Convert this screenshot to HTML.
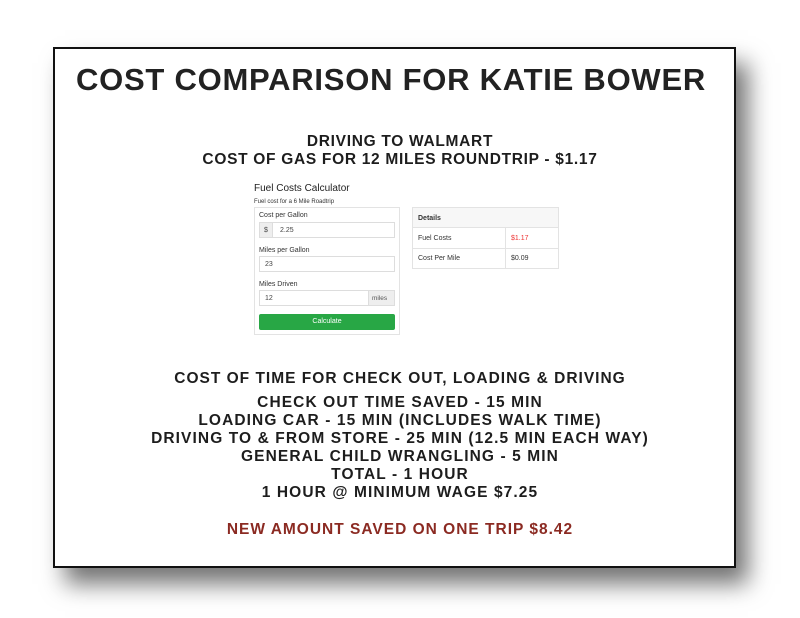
<!DOCTYPE html>
<html><head><style>
*{margin:0;padding:0;box-sizing:border-box}
body{width:800px;height:618px;background:#fff;position:relative;overflow:hidden;font-family:"Liberation Sans",sans-serif}
.card{position:absolute;left:53px;top:47px;width:683px;height:521px;background:#fff;border:2px solid #111;box-shadow:12px 16px 22px rgba(0,0,0,.55)}
.t{position:absolute;left:0;width:800px;text-align:center;font-weight:bold;color:#1d1d1d;white-space:nowrap}
.h1{top:62px;left:-9px;font-size:31px;letter-spacing:0.75px;color:#222}
.s{font-size:15.5px;letter-spacing:1px;line-height:18px}
.c{position:absolute;font-size:7px;color:#333}
.box{position:absolute;border:1px solid #e3e3e3;background:#fff}
.inp{position:absolute;border:1px solid #ddd;height:16px;font-size:7px;color:#444;padding:4px 5px}
</style></head><body>
<div class="card"></div>
<div class="t h1">COST COMPARISON FOR KATIE BOWER</div>
<div class="t s" style="top:133px;letter-spacing:.7px">DRIVING TO WALMART<br>COST OF GAS FOR 12 MILES ROUNDTRIP - $1.17</div>

<div class="c" style="left:254px;top:183px;font-size:10px;color:#222">Fuel Costs Calculator</div>
<div class="c" style="left:254px;top:199px;font-size:6px">Fuel cost for a 6 Mile Roadtrip</div>
<div class="box" style="left:254px;top:207px;width:146px;height:128px"></div>
<div class="c" style="left:259px;top:212px">Cost per Gallon</div>
<div class="inp" style="left:259px;top:222px;width:136px;padding-left:20px">2.25</div>
<div style="position:absolute;left:259px;top:222px;width:14px;height:16px;background:#eee;border:1px solid #ddd;font-size:7px;color:#444;padding:4px 4px">$</div>
<div class="c" style="left:259px;top:247px">Miles per Gallon</div>
<div class="inp" style="left:259px;top:256px;width:136px">23</div>
<div class="c" style="left:259px;top:281px">Miles Driven</div>
<div class="inp" style="left:259px;top:290px;width:136px">12</div>
<div style="position:absolute;left:368px;top:290px;width:27px;height:16px;background:#eee;border:1px solid #ddd;font-size:6.5px;color:#555;padding:4px 3px">miles</div>
<div style="position:absolute;left:259px;top:314px;width:136px;height:16px;background:#28a745;border-radius:2px;color:#fff;font-size:7px;text-align:center;line-height:16px">Calculate</div>

<div class="box" style="left:412px;top:207px;width:147px;height:62px"></div>
<div style="position:absolute;left:413px;top:208px;width:145px;height:20px;background:#f7f7f7;border-bottom:1px solid #e3e3e3"></div>
<div class="c" style="left:418px;top:215px;font-weight:bold">Details</div>
<div style="position:absolute;left:413px;top:248px;width:145px;border-top:1px solid #e3e3e3"></div>
<div style="position:absolute;left:505px;top:228px;height:41px;border-left:1px solid #e3e3e3"></div>
<div class="c" style="left:418px;top:235px">Fuel Costs</div>
<div class="c" style="left:511px;top:235px;color:#e33">$1.17</div>
<div class="c" style="left:418px;top:255px">Cost Per Mile</div>
<div class="c" style="left:511px;top:255px">$0.09</div>

<div class="t s" style="top:370px">COST OF TIME FOR CHECK OUT, LOADING &amp; DRIVING</div>
<div class="t s" style="top:394px;letter-spacing:1.1px">CHECK OUT TIME SAVED - 15 MIN<br>LOADING CAR - 15 MIN (INCLUDES WALK TIME)<br>DRIVING TO &amp; FROM STORE - 25 MIN (12.5 MIN EACH WAY)<br>GENERAL CHILD WRANGLING - 5 MIN<br>TOTAL - 1 HOUR<br>1 HOUR @ MINIMUM WAGE $7.25</div>
<div class="t s" style="top:521px;color:#8b2a22;letter-spacing:1px">NEW AMOUNT SAVED ON ONE TRIP $8.42</div>
</body></html>
